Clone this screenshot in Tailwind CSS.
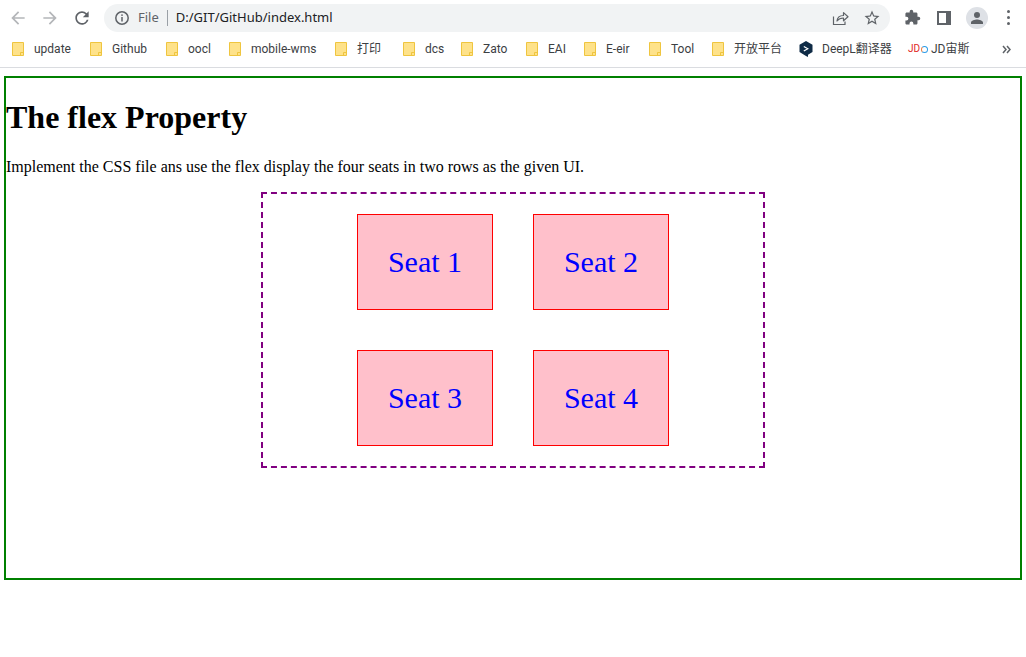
<!DOCTYPE html>
<html lang="en">
<head>
    <meta charset="UTF-8">
    <script src="https://cdn.jsdelivr.net/npm/@tailwindcss/browser@4"></script>
    <title>The flex Property</title>
</head>
<body class="bg-white">
    <!-- Browser toolbar -->
    <div class="h-[68px] border-b border-[#dadce0] font-['Roboto','Noto_Sans_CJK_SC',sans-serif]">
        <div class="flex items-center h-[34px] pt-[1px]">
            <div class="flex items-center w-[104px] pl-[8px] gap-[12px] shrink-0">
                <svg class="w-5 h-5 fill-[#b4b6b9]" viewBox="0 0 24 24"><path d="M20 11H7.83l5.59-5.59L12 4l-8 8 8 8 1.41-1.41L7.83 13H20v-2z"/></svg>
                <svg class="w-5 h-5 fill-[#b4b6b9]" viewBox="0 0 24 24"><path d="M4 11h12.17l-5.59-5.59L12 4l8 8-8 8-1.41-1.41L16.17 13H4v-2z"/></svg>
                <svg class="w-5 h-5 fill-[#5f6368]" viewBox="0 0 24 24"><path d="M17.65 6.35A7.958 7.958 0 0 0 12 4c-4.42 0-7.99 3.58-7.99 8s3.57 8 7.99 8c3.73 0 6.84-2.55 7.73-6h-2.08A5.99 5.99 0 0 1 12 18c-3.31 0-6-2.69-6-6s2.69-6 6-6c1.66 0 3.14.69 4.22 1.78L13 11h7V4l-2.35 2.35z"/></svg>
            </div>
            <!-- Address bar -->
            <div class="flex items-center w-[786px] h-[28px] rounded-full bg-[#f1f3f4] shrink-0 pl-[10px] pr-[9px] font-['Noto_Sans',sans-serif]">
                <svg class="w-4 h-4 shrink-0" viewBox="0 0 16 16" fill="none"><circle cx="8" cy="8" r="6.2" stroke="#5f6368" stroke-width="1.5"/><rect x="7.25" y="7" width="1.5" height="4.5" fill="#5f6368"/><rect x="7.25" y="4.4" width="1.5" height="1.5" fill="#5f6368"/></svg>
                <span class="ml-[8px] text-[13px] text-[#5f6368]">File</span>
                <span class="ml-[8px] w-px h-[16px] bg-[#9aa0a6]"></span>
                <span class="ml-[8px] text-[13px] text-[#202124]">D:/GIT/GitHub/index.html</span>
                <svg class="ml-auto w-[18px] h-[18px]" viewBox="0 0 18 18" fill="none" stroke="#5f6368" stroke-width="1.2"><path d="M2.500 7.500v8h11.500v-3"/><path d="M6 12c.3-3.400 2.800-5.500 6.500-5.500V3.600L17 7.800l-4.500 4V9C9.800 9 7.500 10 6 12z" stroke-linejoin="round"/></svg>
                <svg class="ml-[14px] w-[18px] h-[18px]" viewBox="0 0 24 24" fill="#5f6368"><path d="M22 9.240l-7.190-.62L12 2 9.190 8.630 2 9.240l5.460 4.730L5.820 21 12 17.270 18.180 21l-1.630-7.030L22 9.240zM12 15.400l-3.760 2.270 1-4.280-3.320-2.880 4.380-.38L12 6.100l1.710 4.040 4.380.38-3.320 2.880 1 4.280L12 15.400z"/></svg>
            </div>
            <div class="flex items-center pl-[14px] gap-[12px]">
                <svg class="w-[17px] h-[17px] fill-[#5f6368]" viewBox="0 0 24 24"><path d="M20.500 11H19V7c0-1.100-.9-2-2-2h-4V3.500a2.500 2.500 0 0 0-5 0V5H4c-1.100 0-2 .9-2 2v3.800h1.500a2.700 2.700 0 0 1 0 5.400H2V20c0 1.100.9 2 2 2h3.800v-1.500a2.700 2.700 0 0 1 5.400 0V22H17c1.100 0 2-.9 2-2v-4h1.500a2.500 2.500 0 0 0 0-5z"/></svg>
                <svg class="w-5 h-5 ml-[1px]" viewBox="0 0 20 20" fill="none"><rect x="3" y="3" width="14" height="14" fill="#5f6368"/><rect x="5" y="5" width="7" height="10" fill="#fff"/></svg>
                <div class="w-[22px] h-[22px] rounded-full bg-[#dee1e6] flex items-center justify-center">
                    <svg class="w-[18px] h-[18px] fill-[#5f6368]" viewBox="0 0 24 24"><path d="M12 12a4 4 0 1 0 0-8 4 4 0 0 0 0 8zm0 2c-2.700 0-8 1.340-8 4v2h16v-2c0-2.660-5.300-4-8-4z"/></svg>
                </div>
                <div class="ml-[7px] flex flex-col gap-[3px]">
                    <span class="w-[3px] h-[3px] rounded-full bg-[#5f6368]"></span>
                    <span class="w-[3px] h-[3px] rounded-full bg-[#5f6368]"></span>
                    <span class="w-[3px] h-[3px] rounded-full bg-[#5f6368]"></span>
                </div>
            </div>
        </div>

        <!-- Bookmarks bar -->
        <div class="flex items-center h-[30px] pl-[12px] text-[12px] text-[#3c4043] whitespace-nowrap">
            <div class="flex items-center gap-[10px] w-[78px] shrink-0"><svg class="w-[12px] h-[14px] shrink-0" viewBox="0 0 12 14"><path d="M.5.5h11v13H.5z" fill="#fee28a" stroke="#efc53f"/><path d="M8.500 13.500v-3h3" fill="none" stroke="#efc53f"/></svg>update</div>
            <div class="flex items-center gap-[10px] w-[76px] shrink-0"><svg class="w-[12px] h-[14px] shrink-0" viewBox="0 0 12 14"><path d="M.5.5h11v13H.5z" fill="#fee28a" stroke="#efc53f"/><path d="M8.500 13.500v-3h3" fill="none" stroke="#efc53f"/></svg>Github</div>
            <div class="flex items-center gap-[10px] w-[63px] shrink-0"><svg class="w-[12px] h-[14px] shrink-0" viewBox="0 0 12 14"><path d="M.5.5h11v13H.5z" fill="#fee28a" stroke="#efc53f"/><path d="M8.500 13.500v-3h3" fill="none" stroke="#efc53f"/></svg>oocl</div>
            <div class="flex items-center gap-[10px] w-[106px] shrink-0"><svg class="w-[12px] h-[14px] shrink-0" viewBox="0 0 12 14"><path d="M.5.5h11v13H.5z" fill="#fee28a" stroke="#efc53f"/><path d="M8.500 13.500v-3h3" fill="none" stroke="#efc53f"/></svg>mobile-wms</div>
            <div class="flex items-center gap-[10px] w-[68px] shrink-0"><svg class="w-[12px] h-[14px] shrink-0" viewBox="0 0 12 14"><path d="M.5.5h11v13H.5z" fill="#fee28a" stroke="#efc53f"/><path d="M8.500 13.500v-3h3" fill="none" stroke="#efc53f"/></svg>打印</div>
            <div class="flex items-center gap-[10px] w-[58px] shrink-0"><svg class="w-[12px] h-[14px] shrink-0" viewBox="0 0 12 14"><path d="M.5.5h11v13H.5z" fill="#fee28a" stroke="#efc53f"/><path d="M8.500 13.500v-3h3" fill="none" stroke="#efc53f"/></svg>dcs</div>
            <div class="flex items-center gap-[10px] w-[65px] shrink-0"><svg class="w-[12px] h-[14px] shrink-0" viewBox="0 0 12 14"><path d="M.5.5h11v13H.5z" fill="#fee28a" stroke="#efc53f"/><path d="M8.500 13.500v-3h3" fill="none" stroke="#efc53f"/></svg>Zato</div>
            <div class="flex items-center gap-[10px] w-[58px] shrink-0"><svg class="w-[12px] h-[14px] shrink-0" viewBox="0 0 12 14"><path d="M.5.5h11v13H.5z" fill="#fee28a" stroke="#efc53f"/><path d="M8.500 13.500v-3h3" fill="none" stroke="#efc53f"/></svg>EAI</div>
            <div class="flex items-center gap-[10px] w-[65px] shrink-0"><svg class="w-[12px] h-[14px] shrink-0" viewBox="0 0 12 14"><path d="M.5.5h11v13H.5z" fill="#fee28a" stroke="#efc53f"/><path d="M8.500 13.500v-3h3" fill="none" stroke="#efc53f"/></svg>E-eir</div>
            <div class="flex items-center gap-[10px] w-[63px] shrink-0"><svg class="w-[12px] h-[14px] shrink-0" viewBox="0 0 12 14"><path d="M.5.5h11v13H.5z" fill="#fee28a" stroke="#efc53f"/><path d="M8.500 13.500v-3h3" fill="none" stroke="#efc53f"/></svg>Tool</div>
            <div class="flex items-center gap-[10px] w-[87px] shrink-0"><svg class="w-[12px] h-[14px] shrink-0" viewBox="0 0 12 14"><path d="M.5.5h11v13H.5z" fill="#fee28a" stroke="#efc53f"/><path d="M8.500 13.500v-3h3" fill="none" stroke="#efc53f"/></svg>开放平台</div>
            <div class="flex items-center gap-[9px] w-[109px] shrink-0"><svg class="w-[14px] h-[16px] shrink-0" viewBox="0 0 14 16"><path d="M7 0l6.500 3.700v7.400L9 13.800V16l-2-1.100L.5 11.100V3.700z" fill="#0f2b46"/><path d="M4.800 5.500l4 2.300-4 2.300" stroke="#fff" stroke-width="1.200" fill="none"/></svg>DeepL翻译器</div>
            <div class="flex items-center gap-[5px] w-[94px] shrink-0"><span class="w-[18px] shrink-0 flex items-center text-[10px] leading-none"><span class="text-[#e1251b]">JD</span><span class="ml-[1px] w-[7px] h-[7px] shrink-0 rounded-full border-[1.5px] border-[#2b9ce8] border-l-[#f07a3a]"></span></span>JD宙斯</div>
            <svg class="w-[9px] h-[9px] shrink-0" viewBox="0 0 9 9" fill="none" stroke="#5f6368" stroke-width="1.500"><path d="M1 1l3 3.500L1 8M5 1l3 3.500L5 8"/></svg>
        </div>
    </div>

    <!-- Page content -->
    <div class="mx-1 mt-2 h-[504px] border-2 border-[green] text-black font-['Liberation_Serif',serif] text-[16px]">
        <h1 class="pt-[21.44px] text-[32px] leading-[37px] font-bold">The flex Property</h1>
        <p class="mt-[21.44px] mb-4 leading-[18px]">Implement the CSS file ans use the flex display the four seats in two rows as the given UI.</p>
        <div class="mx-auto w-[504px] border-2 border-dashed border-[purple] flex flex-wrap justify-center">
            <div class="m-5 w-[136px] h-[96px] border border-[red] bg-[pink] text-[blue] text-[30px] flex items-center justify-center">Seat 1</div>
            <div class="m-5 w-[136px] h-[96px] border border-[red] bg-[pink] text-[blue] text-[30px] flex items-center justify-center">Seat 2</div>
            <div class="m-5 w-[136px] h-[96px] border border-[red] bg-[pink] text-[blue] text-[30px] flex items-center justify-center">Seat 3</div>
            <div class="m-5 w-[136px] h-[96px] border border-[red] bg-[pink] text-[blue] text-[30px] flex items-center justify-center">Seat 4</div>
        </div>
    </div>
</body>
</html>
